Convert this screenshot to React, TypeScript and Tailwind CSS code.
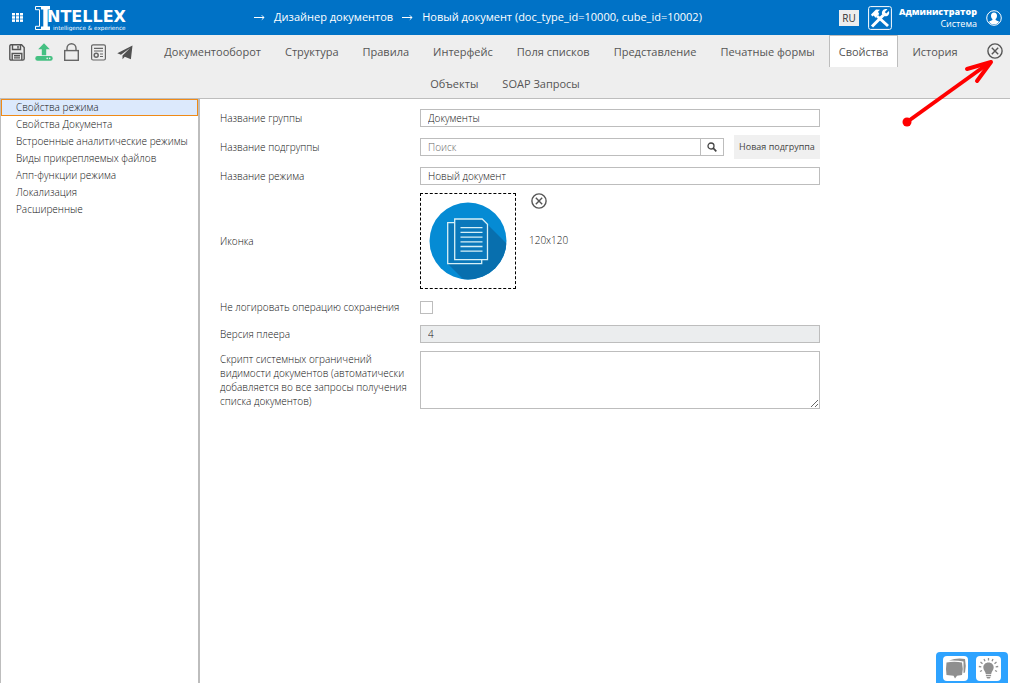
import type { ReactNode } from "react";

const INPUT =
  "h-[18px] w-full border border-[#bdbdbd] bg-white px-[7px] text-[10px] leading-4 outline-none";

function CloseIcon() {
  return (
    <svg width="16" height="16" viewBox="0 0 16 16" fill="none" stroke="#555" aria-hidden="true">
      <circle cx="8" cy="8" r="7.1" strokeWidth="1.4" />
      <path d="M4.8 4.8l6.4 6.4M11.2 4.8l-6.4 6.4" strokeWidth="1.4" />
    </svg>
  );
}

function Logo() {
  return (
    <svg width="94" height="27" viewBox="0 0 94 27" fill="#fff" role="img" aria-label="Intellex">
      <path d="M.500 2.500H7M.500 25.500H7M.500 2.500v3.200h4v16.600h-4v3.200" fill="none" stroke="#fff" />
      <path d="M6 2h9v3.600h-2.300v16.800H15V26H6v-3.600h2.300V5.600H6z" />
      <text x="12" y="18" fontFamily="'DejaVu Sans', sans-serif" fontWeight="700" fontSize="16">
        NTELLEX
      </text>
      <text x="18" y="26" fontFamily="'DejaVu Sans', sans-serif" fontWeight="400" fontSize="5.700">
        intelligence &amp; experience
      </text>
    </svg>
  );
}

function ToolButton({ label, children }: { label: string; children: ReactNode }) {
  return (
    <button type="button" aria-label={label} className="flex h-5 w-5 items-center justify-center">
      {children}
    </button>
  );
}

function Toolbar() {
  return (
    <div className="flex shrink-0 gap-[7px] pt-[7px] pl-[7px]">
      <ToolButton label="Сохранить">
        <svg width="16" height="17" viewBox="0 0 16 17" fill="none" stroke="#555" strokeWidth="1.4">
          <path d="M2 .8h10.6l2.600 2.700v11.200q0 1.400-1.400 1.400H2.200Q.8 16.100.8 14.700V2.200Q.8.800 2 .8z" />
          <path d="M3.500.8v4.700h8V.8M9 2v2.400M3.200 16V9.500h9.600V16M5 11.700h6M5 13.900h6" />
        </svg>
      </ToolButton>
      <ToolButton label="Загрузить">
        <svg width="18" height="18" viewBox="0 0 18 18" fill="#45c082">
          <path d="M9 .3l5.800 5.900h-3.600v6H6.800v-6H3.200z" />
          <rect x=".3" y="13" width="17.400" height="4.700" rx="2.200" />
          <g fill="#eee">
            <circle cx="12.200" cy="15.400" r=".8" />
            <circle cx="14.700" cy="15.400" r=".8" />
          </g>
        </svg>
      </ToolButton>
      <ToolButton label="Заблокировать">
        <svg width="15" height="18" viewBox="0 0 15 18" fill="none" stroke="#666" strokeWidth="1.400">
          <rect x=".7" y="7.600" width="13.600" height="9.700" />
          <path d="M3 7.500V5.200a4.500 4.500 0 0 1 9 0v2.300" />
        </svg>
      </ToolButton>
      <ToolButton label="Сертификат">
        <svg width="15" height="17" viewBox="0 0 15 17" fill="none" stroke="#666" strokeWidth="1.200">
          <rect x=".6" y=".8" width="13.800" height="15.200" rx="1.500" />
          <path d="M3 4.300h9M3 7h9M9 10h3M9 12.500h3" />
          <circle cx="5.200" cy="11.300" r="2" strokeWidth="1.500" />
        </svg>
      </ToolButton>
      <ToolButton label="Отправить">
        <svg width="16" height="15" viewBox="0 0 16 15" fill="#505050">
          <path d="M15.500.5L.3 8.200l3.700 1.600L13 3 5.500 10.400v3.900l2.300-2.600 1.800.8 4.300 1.800z" />
        </svg>
      </ToolButton>
    </div>
  );
}

function Tab({ children, active = false }: { children: string; active?: boolean }) {
  return (
    <a
      href="#"
      aria-current={active ? "page" : undefined}
      className={
        active
          ? "h-8 shrink-0 border border-b-0 border-[#bdbdbd] bg-white px-[9px] leading-8 whitespace-nowrap"
          : "h-8 shrink-0 border border-b-0 border-transparent px-[9px] leading-8 whitespace-nowrap"
      }
    >
      {children}
    </a>
  );
}

const TABS = [
  "Документооборот",
  "Структура",
  "Правила",
  "Интерфейс",
  "Поля списков",
  "Представление",
  "Печатные формы",
  "Свойства",
  "История",
];

const SECTIONS = [
  "Свойства режима",
  "Свойства Документа",
  "Встроенные аналитические режимы",
  "Виды прикрепляемых файлов",
  "Апп-функции режима",
  "Локализация",
  "Расширенные",
];

function Header() {
  return (
    <header className="flex h-[35px] items-center bg-[#0072c6] text-white">
      <button type="button" aria-label="Меню" className="ml-3">
        <svg width="11" height="9" viewBox="0 0 11 9" fill="#fff">
          {[0, 3.2, 6.4].map((y) => (
            <g key={y}>
              <rect x="0" y={y} width="3" height="2.500" />
              <rect x="4" y={y} width="3" height="2.500" />
              <rect x="8" y={y} width="3" height="2.500" />
            </g>
          ))}
        </svg>
      </button>
      <a href="#" className="ml-3">
        <Logo />
      </a>
      <nav className="flex flex-1 items-center justify-center gap-[9px] pr-3 text-[11px] font-medium">
        <Arrow />
        <a href="#">Дизайнер документов</a>
        <Arrow />
        <a href="#">Новый документ (doc_type_id=10000, cube_id=10002)</a>
      </nav>
      <button type="button" className="h-4 w-5 bg-[#eee] text-[10px] leading-4 font-normal text-[#333]">
        RU
      </button>
      <button type="button" aria-label="Настройки" className="ml-[9px]">
        <svg width="24" height="24" viewBox="0 0 24 24" fill="none" stroke="#fff">
          <rect x=".6" y=".6" width="22.800" height="22.800" rx="2" strokeWidth="1" />
          <path d="M9 10l11 10" strokeWidth="3" />
          <path d="M4 20.500L15.500 9" strokeWidth="3" />
          <path d="M3 8.500l5-5 4 .3-2 2 1.200 2.200-3.700 3.700L5.700 9.500l-1.500 1z" fill="#fff" stroke="none" />
          <path d="M19.500 3.200l-2.700 2.700 1.400 1.500 2.700-2.500c1 3-.8 5.800-4.400 5.300L14 7.900c-.6-3.300 2-5.700 5.500-4.700z" fill="#fff" stroke="none" />
        </svg>
      </button>
      <div className="ml-[7px] text-right text-[9px] leading-3">
        <div className="font-extrabold">Администратор</div>
        <div className="font-medium">Система</div>
      </div>
      <button type="button" aria-label="Профиль" className="mr-2 ml-[9px]">
        <svg width="16" height="16" viewBox="0 0 16 16">
          <circle cx="8" cy="8" r="7.300" fill="none" stroke="#fff" strokeWidth="1" />
          <path
            d="M8 2.500c2 0 3 1.400 3 3.200 0 1.500-.6 2.600-1.400 3.300v1.100l3.600 1.600C12 13.400 10.200 14.300 8 14.300s-4-.9-5.200-2.600l3.600-1.600V9C5.600 8.300 5 7.200 5 5.700c0-1.800 1-3.200 3-3.200z"
            fill="#fff"
          />
        </svg>
      </button>
    </header>
  );
}

function Arrow() {
  return (
    <svg width="11" height="7" viewBox="0 0 11 7" fill="none" stroke="#fff" aria-hidden="true">
      <path d="M0 3.500h10M7.800 1.300L10 3.500 7.800 5.700" />
    </svg>
  );
}

function Row({ label, id, children }: { label: string; id: string; children: ReactNode }) {
  return (
    <div className="grid grid-cols-[200px_400px] items-center">
      <label htmlFor={id} className="pr-2 leading-[14px]">
        {label}
      </label>
      {children}
    </div>
  );
}

function PropertiesForm() {
  return (
    <form className="flex flex-1 flex-col gap-2 pt-[10px] pl-5">
      <Row label="Название группы" id="group">
        <input id="group" defaultValue="Документы" className={INPUT} />
      </Row>
      <Row label="Название подгруппы" id="subgroup">
        <div className="flex items-center">
          <input id="subgroup" placeholder="Поиск" className={INPUT + " placeholder:text-[#666]"} />
          <button
            type="button"
            aria-label="Найти"
            className="flex h-[18px] w-[23px] shrink-0 items-center justify-center border border-l-0 border-[#bdbdbd]"
          >
            <svg width="10" height="10" viewBox="0 0 10 10" fill="none" stroke="#444">
              <circle cx="4" cy="4" r="3" strokeWidth="1.300" />
              <path d="M6.200 6.200L9.300 9.300" strokeWidth="1.700" />
            </svg>
          </button>
          <button
            type="button"
            className="ml-[10px] h-6 w-[86px] shrink-0 bg-[#f0f0f0] text-[9px] font-normal whitespace-nowrap text-[#444]"
          >
            Новая подгруппа
          </button>
        </div>
      </Row>
      <Row label="Название режима" id="mode">
        <input id="mode" defaultValue="Новый документ" className={INPUT} />
      </Row>
      <Row label="Иконка" id="icon">
        <div className="flex">
          <button
            id="icon"
            type="button"
            aria-label="Выбрать иконку"
            className="flex h-24 w-24 items-center justify-center border border-dashed border-black"
          >
            <svg width="78" height="78" viewBox="0 0 78 78">
              <defs>
                <clipPath id="disc">
                  <circle cx="39" cy="39" r="38.500" />
                </clipPath>
              </defs>
              <g clipPath="url(#disc)">
                <rect width="78" height="78" fill="#058bd4" />
                <path d="M19 62L58 22l30 30v36H45z" fill="#086fae" />
              </g>
              <g fill="#0a78bb" stroke="#d6f0f7" strokeWidth="1.300">
                <path d="M18.700 20.700h34v41h-34z" />
                <path d="M25.700 17h27.500l5.300 5.300v35.400H25.700z" />
              </g>
              <path
                d="M31.500 25.700h22M31.500 30.400h22M31.500 35.100h22M31.500 39.800h22M31.500 44.500h22M31.500 49.200h22"
                stroke="#d6f0f7"
                strokeWidth="1.300"
              />
            </svg>
          </button>
          <div className="ml-[13px] flex flex-col items-start gap-6">
            <button type="button" aria-label="Удалить иконку" className="ml-[2px]">
              <CloseIcon />
            </button>
            <span className="leading-[14px]">120x120</span>
          </div>
        </div>
      </Row>
      <Row label="Не логировать операцию сохранения" id="nolog">
        <div className="flex h-5 items-center">
          <input
            id="nolog"
            type="checkbox"
            className="h-[13px] w-[13px] appearance-none border border-[#bdbdbd] bg-white checked:bg-[#0072c6]"
          />
        </div>
      </Row>
      <Row label="Версия плеера" id="version">
        <input
          id="version"
          defaultValue="4"
          readOnly
          className="h-[18px] w-full border border-[#bdbdbd] bg-[#ebedee] px-[7px] text-[10px] leading-4 outline-none"
        />
      </Row>
      <Row
        label="Скрипт системных ограничений видимости документов (автоматически добавляется во все запросы получения списка документов)"
        id="script"
      >
        <textarea id="script" className="block h-[58px] w-full border border-[#bdbdbd] bg-white px-[7px] outline-none" />
      </Row>
    </form>
  );
}

export default function App() {
  return (
    <div className="relative flex min-h-screen flex-col bg-white font-['Open_Sans',sans-serif] text-[10px] font-light text-[#111]">
      <Header />
      <div className="border-b border-[#bdbdbd] bg-[#eee] text-[11px] font-normal text-[#555]">
        <div className="flex h-8 items-start">
          <Toolbar />
          <nav className="flex flex-1 justify-center gap-1">
            {TABS.map((t) => (
              <Tab key={t} active={t === "Свойства"}>
                {t}
              </Tab>
            ))}
          </nav>
          <button type="button" aria-label="Закрыть" className="mt-2 mr-[7px]">
            <CloseIcon />
          </button>
        </div>
        <nav className="flex h-[31px] justify-center gap-1">
          <Tab>Объекты</Tab>
          <Tab>SOAP Запросы</Tab>
        </nav>
      </div>
      <div className="flex flex-1">
        <aside className="w-[200px] shrink-0 border-r-2 border-l border-[#bdbdbd]">
          <ul>
            {SECTIONS.map((s, i) => (
              <li key={s}>
                <a
                  href="#"
                  className={
                    i === 0
                      ? "block h-[17px] border border-[#ef8a17] bg-[#dce9fc] pl-[14px] leading-[15px] whitespace-nowrap"
                      : "block h-[17px] pl-[15px] leading-[17px] whitespace-nowrap"
                  }
                >
                  {s}
                </a>
              </li>
            ))}
          </ul>
        </aside>
        <PropertiesForm />
      </div>

      <svg
        className="pointer-events-none absolute top-[56px] right-[12px]"
        width="98"
        height="72"
        viewBox="0 0 98 72"
        fill="none"
        stroke="#f00"
        strokeWidth="4"
        aria-hidden="true"
      >
        <circle cx="7" cy="66" r="4.500" fill="#f00" stroke="none" />
        <path d="M7 66L89 7" />
        <path d="M67 13l24-7-14 19" strokeLinecap="round" strokeLinejoin="round" />
      </svg>

      <div className="fixed right-[2px] bottom-0 flex h-[31px] gap-[8px] rounded-t bg-[#2ea3ff] px-[7px] pt-1">
        <button type="button" aria-label="Чат" className="h-[25px] w-[25px] rounded bg-white">
          <svg width="25" height="25" viewBox="0 0 25 25" fill="#8f8f8f">
            <path d="M6 4.500Q14 1.500 22 3q1.500 7 0 13.500l-1.500.5V5.500Q14 4 6 4.500z" />
            <path d="M3.500 6.500q8-1.500 15.500 0 1.500 6 0 12.500l-5 .8-2 2.700-1.500-2.700-7-.8q-1-6 0-12.500z" />
          </svg>
        </button>
        <button type="button" aria-label="Подсказка" className="h-[25px] w-[25px] rounded bg-white">
          <svg width="25" height="25" viewBox="0 0 25 25" fill="#8f8f8f">
            <path d="M12.500 6.500c3.200 0 5.200 2.200 5.200 5 0 2.700-2.200 3.700-2.500 6.500H9.800c-.3-2.800-2.500-3.800-2.500-6.500 0-2.800 2-5 5.200-5z" />
            <path d="M9.900 18.700h5.200v1.500H9.900zM10.300 20.900h4.400l-1 1.700h-2.400z" />
            <path
              d="M12.500 2v2.500M8 3l1 2.300M17 3l-1 2.300M4.500 6l2 1.700M20.500 6l-2 1.700M2.800 10.500l2.500.3M22.200 10.500l-2.500.3M4 15.500l2-1M21 15.500l-2-1"
              stroke="#8f8f8f"
              strokeWidth="1.300"
            />
          </svg>
        </button>
      </div>
    </div>
  );
}
